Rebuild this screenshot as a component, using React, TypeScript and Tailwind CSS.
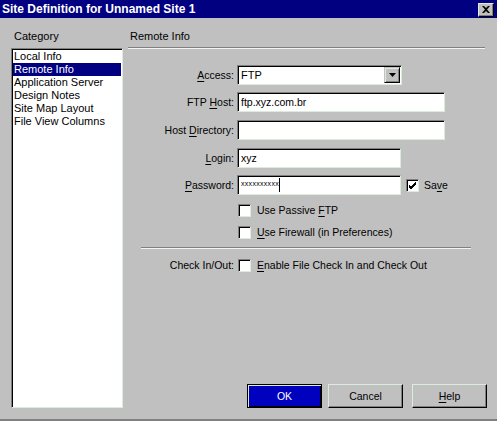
import type { ReactNode } from "react";

const categories = [
  "Local Info",
  "Remote Info",
  "Application Server",
  "Design Notes",
  "Site Map Layout",
  "File View Columns",
];

const sunken =
  "bg-white border border-t-[#808080] border-l-[#808080] border-b-[#dcecdc] border-r-[#dcecdc] shadow-[inset_1px_1px_0_#000]";

function U({ children }: { children: ReactNode }) {
  return <span className="underline underline-offset-[2px]">{children}</span>;
}

function Row({ label, children, className = "" }: { label: ReactNode; children: ReactNode; className?: string }) {
  return (
    <div className={`flex items-center ${className}`}>
      <div className="w-[106px] text-right shrink-0">{label}</div>
      <div className="ml-[3px] flex items-center">{children}</div>
    </div>
  );
}

function Check({ checked = false }: { checked?: boolean }) {
  return (
    <span className={`w-[13px] h-[13px] shrink-0 grid place-items-center ${sunken}`}>
      {checked && (
        <svg width="9" height="9" viewBox="0 0 9 9">
          <path d="M1 4 L3 6 L8 1 M1 5 L3 7 L8 2 M1 6 L3 8 L8 3" stroke="#000" strokeWidth="1" fill="none" />
        </svg>
      )}
    </span>
  );
}

function Btn({ children, primary = false }: { children: ReactNode; primary?: boolean }) {
  return (
    <button
      className={
        primary
          ? "w-[75px] h-[24px] border border-black bg-[#0000bf] text-white shadow-[inset_1px_1px_0_#dcecdc,inset_-1px_-1px_0_#000]"
          : "w-[75px] h-[24px] border border-t-[#dcecdc] border-l-[#dcecdc] border-b-black border-r-black bg-[#c0c0c0] text-black shadow-[inset_-1px_-1px_0_#808080]"
      }
    >
      {children}
    </button>
  );
}

export default function App() {
  return (
    <div className="w-[497px] h-[421px] bg-[#c0c0c0] flex flex-col overflow-hidden font-['Liberation_Sans',Arial,sans-serif] text-[10.5px] leading-[13px] text-black">
      <div className="h-[18px] bg-[#000080] flex items-center justify-between pl-[2px] pr-[3px] shrink-0">
        <span className="text-white font-bold text-[12px] leading-[18px]">Site Definition for Unnamed Site 1</span>
        <span className="w-[16px] h-[14px] mt-[1px] bg-[#c0c0c0] border border-t-[#dcecdc] border-l-[#dcecdc] border-b-black border-r-black shadow-[inset_-1px_-1px_0_#808080] grid place-items-center">
          <svg width="8" height="7" viewBox="0 0 8 7">
            <path d="M0 0 L2 0 L4 2 L6 0 L8 0 L5 3.5 L8 7 L6 7 L4 5 L2 7 L0 7 L3 3.5 Z" fill="#000" />
          </svg>
        </span>
      </div>

      <div className="flex-1 flex pl-[11px] pt-[12px] pb-[11px]">
        <div className="w-[112px] flex flex-col shrink-0">
          <div className="pl-[3px] text-[11px]">Category</div>
          <div className={`mt-[5px] flex-1 p-[1px] text-[11px] ${sunken}`}>
            {categories.map((c) => (
              <div
                key={c}
                className={`h-[13px] px-[1px] whitespace-nowrap ${c === "Remote Info" ? "bg-[#000080] text-white" : ""}`}
              >
                {c}
              </div>
            ))}
          </div>
        </div>

        <div className="ml-[5px] w-[359px] flex flex-col">
          <div className="pl-[2px] text-[11px]">Remote Info</div>
          <div className="mt-[4px] w-[357px] h-[2px] border-t border-t-[#808080] border-b border-b-[#f4f4f4]" />

          <Row className="mt-[16px]" label={<><U>A</U>ccess:</>}>
            <div className={`w-[165px] h-[20px] flex items-center justify-between pl-[3px] pr-[1px] ${sunken}`}>
              <span className="text-[11px]">FTP</span>
              <span className="w-[16px] h-[16px] bg-[#c0c0c0] border border-t-[#c0c0c0] border-l-[#c0c0c0] border-b-black border-r-black shadow-[inset_1px_1px_0_#dcecdc,inset_-1px_-1px_0_#808080] grid place-items-center">
                <svg width="7" height="4" viewBox="0 0 7 4">
                  <path d="M0 0 H7 L3.5 4 Z" fill="#000" />
                </svg>
              </span>
            </div>
          </Row>

          <Row className="mt-[7px]" label={<>FTP <U>H</U>ost:</>}>
            <div className={`w-[208px] h-[20px] flex items-center pl-[3px] ${sunken}`}>ftp.xyz.com.br</div>
          </Row>

          <Row className="mt-[8px]" label={<>Host <U>D</U>irectory:</>}>
            <div className={`w-[208px] h-[20px] ${sunken}`} />
          </Row>

          <Row className="mt-[8px]" label={<><U>L</U>ogin:</>}>
            <div className={`w-[164px] h-[20px] flex items-center pl-[3px] ${sunken}`}>xyz</div>
          </Row>

          <Row className="mt-[7px]" label={<><U>P</U>assword:</>}>
            <div className={`w-[164px] h-[20px] flex items-center pl-[3px] ${sunken}`}>
              <span className="text-[7px] leading-[8px] tracking-[0.3px] mt-[-3px]">xxxxxxxxxx</span>
              <span className="w-px h-[14px] bg-black" />
            </div>
            <div className="ml-[5px] flex items-center gap-[5px]">
              <Check checked />
              <span>Sa<U>v</U>e</span>
            </div>
          </Row>

          <div className="mt-[9px] pl-[110px] flex items-center gap-[6px]">
            <Check />
            <span>Use Passive <U>F</U>TP</span>
          </div>
          <div className="mt-[9px] pl-[110px] flex items-center gap-[6px]">
            <Check />
            <span><U>U</U>se Firewall (in Preferences)</span>
          </div>

          <div className="mt-[8px] ml-[13px] w-[330px] h-[2px] border-t border-t-[#808080] border-b border-b-[#f4f4f4]" />

          <div className="mt-[10px] flex items-center">
            <div className="w-[106px] text-right shrink-0">Check In/Out:</div>
            <div className="ml-[4px] flex items-center gap-[6px]">
              <Check />
              <span><U>E</U>nable File Check In and Check Out</span>
            </div>
          </div>

          <div className="mt-auto flex pl-[119px] gap-[6px]">
            <Btn primary>OK</Btn>
            <Btn>Cancel</Btn>
            <div className="ml-[3px]">
              <Btn><U>H</U>elp</Btn>
            </div>
          </div>
        </div>
      </div>
      <div className="h-[2px] bg-[#808080] shrink-0" />
    </div>
  );
}
